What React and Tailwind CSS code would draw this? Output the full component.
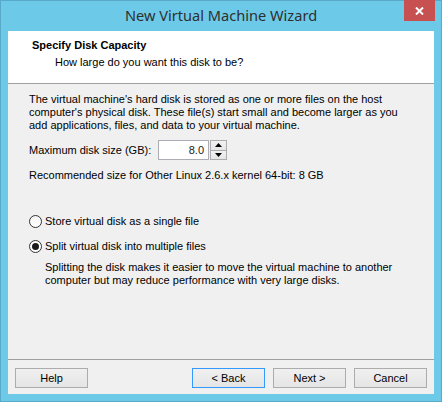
export default function App() {
  const ui = { fontFamily: '"Liberation Sans", Arial, sans-serif' };

  return (
    <div
      className="w-[442px] h-[402px] border border-[#59a9c8] bg-[#6ccae8] flex flex-col text-[11px] leading-[13px] text-black"
      style={ui}
    >
      {/* Title bar */}
      <div className="h-[30px] relative flex items-center justify-center">
        <span
          className="text-[14.6px] text-[#2f2f2f] -mt-[1px]"
          style={{ fontFamily: '"Noto Sans", "Open Sans", sans-serif' }}
        >
          New Virtual Machine Wizard
        </span>
        <div className="absolute right-[6px] -top-[1px] w-[31px] h-[21px] bg-[#c75050] flex items-center justify-center">
          <svg width="9" height="8" viewBox="0 0 9 8">
            <path d="M1 0.5 L8 7.5 M8 0.5 L1 7.5" stroke="#fff" strokeWidth="2" />
          </svg>
        </div>
      </div>

      {/* Client area */}
      <div className="mx-[7px] mb-[7px] flex-1 flex flex-col bg-[#f0f0f0]">
        {/* Header */}
        <div className="h-[53px] bg-white border-b border-[#a0a0a0] pt-[8px] pl-[24px]">
          <div className="font-bold leading-[13px]">Specify Disk Capacity</div>
          <div className="pl-[23px] mt-[4px]">How large do you want this disk to be?</div>
        </div>

        {/* Body */}
        <div className="flex-1 pt-[9px] pl-[21px] pr-[20px] border-b border-[#a0a0a0]">
          <p className="whitespace-nowrap">
            The virtual machine's hard disk is stored as one or more files on the host
            <br />
            computer's physical disk. These file(s) start small and become larger as you
            <br />
            add applications, files, and data to your virtual machine.
          </p>

          <div className="flex items-center mt-[8px] h-[20px]">
            <span className="w-[129px]">Maximum disk size (GB):</span>
            <div className="flex h-[20px]">
              <div className="w-[51px] h-[20px] bg-white border border-[#abadb3] flex items-center justify-end pr-[4px] text-[#1a1a1a]">
                8.0
              </div>
              <div className="w-[17px] h-[20px] flex flex-col ml-[1px]">
                <div className="flex-1 border border-[#acacac] bg-gradient-to-b from-[#f2f2f2] to-[#e5e5e5] flex items-center justify-center">
                  <svg width="7" height="4" viewBox="0 0 7 4">
                    <path d="M3.5 0 L7 4 L0 4 Z" fill="#000" />
                  </svg>
                </div>
                <div className="flex-1 border border-t-0 border-[#acacac] bg-gradient-to-b from-[#f2f2f2] to-[#e5e5e5] flex items-center justify-center">
                  <svg width="7" height="4" viewBox="0 0 7 4">
                    <path d="M0 0 L7 0 L3.5 4 Z" fill="#000" />
                  </svg>
                </div>
              </div>
            </div>
          </div>

          <div className="mt-[9px]">Recommended size for Other Linux 2.6.x kernel 64-bit: 8 GB</div>

          <div className="mt-[32px] flex items-center gap-[3px] h-[14px]">
            <span className="w-[13px] h-[13px] rounded-full border border-[#333] bg-gradient-to-b from-[#f4f4f4] to-white" />
            <span>Store virtual disk as a single file</span>
          </div>

          <div className="mt-[11px] flex items-center gap-[3px] h-[14px]">
            <span className="w-[13px] h-[13px] rounded-full border border-[#333] bg-white flex items-center justify-center">
              <span className="w-[7px] h-[7px] rounded-full bg-[#1a1a1a]" />
            </span>
            <span>Split virtual disk into multiple files</span>
          </div>

          <p className="mt-[8px] pl-[16px] whitespace-nowrap">
            Splitting the disk makes it easier to move the virtual machine to another
            <br />
            computer but may reduce performance with very large disks.
          </p>
        </div>

        {/* Footer buttons */}
        <div className="h-[34px] flex items-start pt-[8px] px-[7px]">
          <Btn>Help</Btn>
          <div className="flex-1" />
          <Btn focused>&lt; Back</Btn>
          <div className="w-[8px]" />
          <Btn>Next &gt;</Btn>
          <div className="w-[8px]" />
          <Btn>Cancel</Btn>
        </div>
      </div>
    </div>
  );
}

function Btn({ children, focused }) {
  return (
    <div
      className={`w-[73px] h-[20px] border flex items-center justify-center bg-gradient-to-b from-[#f0f0f0] to-[#e5e5e5] ${
        focused ? "border-[#3399ff]" : "border-[#acacac]"
      }`}
    >
      {children}
    </div>
  );
}
